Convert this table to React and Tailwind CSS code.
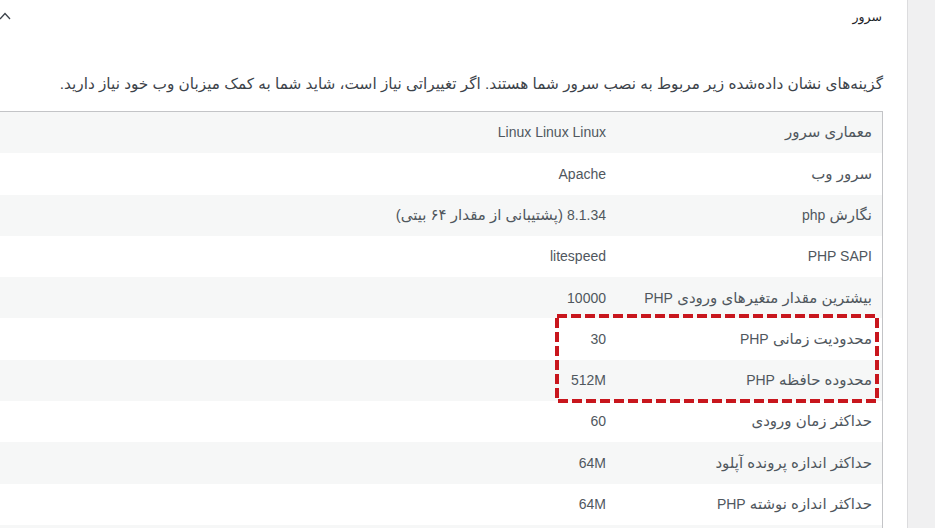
import React from 'react'

const rows = [
  ['معماری سرور', 'Linux Linux Linux'],
  ['سرور وب', 'Apache'],
  ['نگارش php', '8.1.34 (پشتیبانی از مقدار ۶۴ بیتی)'],
  ['PHP SAPI', 'litespeed'],
  ['بیشترین مقدار متغیرهای ورودی PHP', '10000'],
  ['محدودیت زمانی PHP', '30'],
  ['محدوده حافظه PHP', '512M'],
  ['حداکثر زمان ورودی', '60'],
  ['حداکثر اندازه پرونده آپلود', '64M'],
  ['حداکثر اندازه نوشته PHP', '64M'],
  ['', ''],
]

// Latin runs get a slightly smaller size than the Persian text around them
function Mixed({ text }) {
  const parts = text.split(/([A-Za-z0-9.]+(?:\s+[A-Za-z0-9.]+)*)/)
  return parts.map((p, i) =>
    /[A-Za-z0-9]/.test(p) ? (
      <span key={i} className="text-[14px]">{p}</span>
    ) : (
      <span key={i}>{p}</span>
    )
  )
}

export default function App() {
  return (
    <div
      dir="rtl"
      className="flex w-[935px] h-[528px] overflow-hidden bg-white text-[#50575e] text-[15px]"
      style={{ fontFamily: '"Liberation Sans", "DejaVu Sans", sans-serif' }}
    >
      {/* Right gray strip */}
      <div className="w-[28px] shrink-0 bg-[#f0f0f1] border-l border-[#dcdcde]" />

      {/* Panel */}
      <div className="flex-1 overflow-hidden pr-[24px]">
        {/* Header */}
        <div className="flex items-center justify-between h-[34px] pr-[1px]">
          <h2 className="text-[12.5px] font-medium text-[#1d2327]">سرور</h2>
          <svg width="12" height="9" viewBox="0 0 12 9" className="-ml-[1px] mb-[4px]">
            <polyline points="1,8 6,2.5 11,8" fill="none" stroke="#3c434a" strokeWidth="1.3" />
          </svg>
        </div>

        {/* Description */}
        <p className="mt-[38px] text-[15.3px] text-[#3c434a] leading-[24px]">
          گزینه‌های نشان داده‌شده زیر مربوط به نصب سرور شما هستند. اگر تغییراتی نیاز است، شاید شما به کمک میزبان وب خود نیاز دارید.
        </p>

        {/* Table */}
        <div className="relative mt-[15px] border-t border-r border-[#c3c4c7]">
          {rows.map(([label, value], i) => (
            <div
              key={i}
              className={`flex items-center h-[41.3px] ${i % 2 === 0 ? 'bg-[#f6f7f7]' : 'bg-white'}`}
            >
              <div className="w-[265px] shrink-0 pr-[10px] whitespace-nowrap">
                <Mixed text={label} />
              </div>
              <div className="flex-1 pr-[11px] whitespace-nowrap">
                <Mixed text={value} />
              </div>
            </div>
          ))}

          {/* Highlight annotation */}
          <svg
            className="absolute top-[202px] right-[3px]"
            width="324"
            height="89"
            viewBox="0 0 324 89"
          >
            <rect
              x="2"
              y="2"
              width="320"
              height="85"
              fill="none"
              stroke="#c8161d"
              strokeWidth="4"
              strokeDasharray="10 4"
            />
          </svg>
        </div>
      </div>
    </div>
  )
}
